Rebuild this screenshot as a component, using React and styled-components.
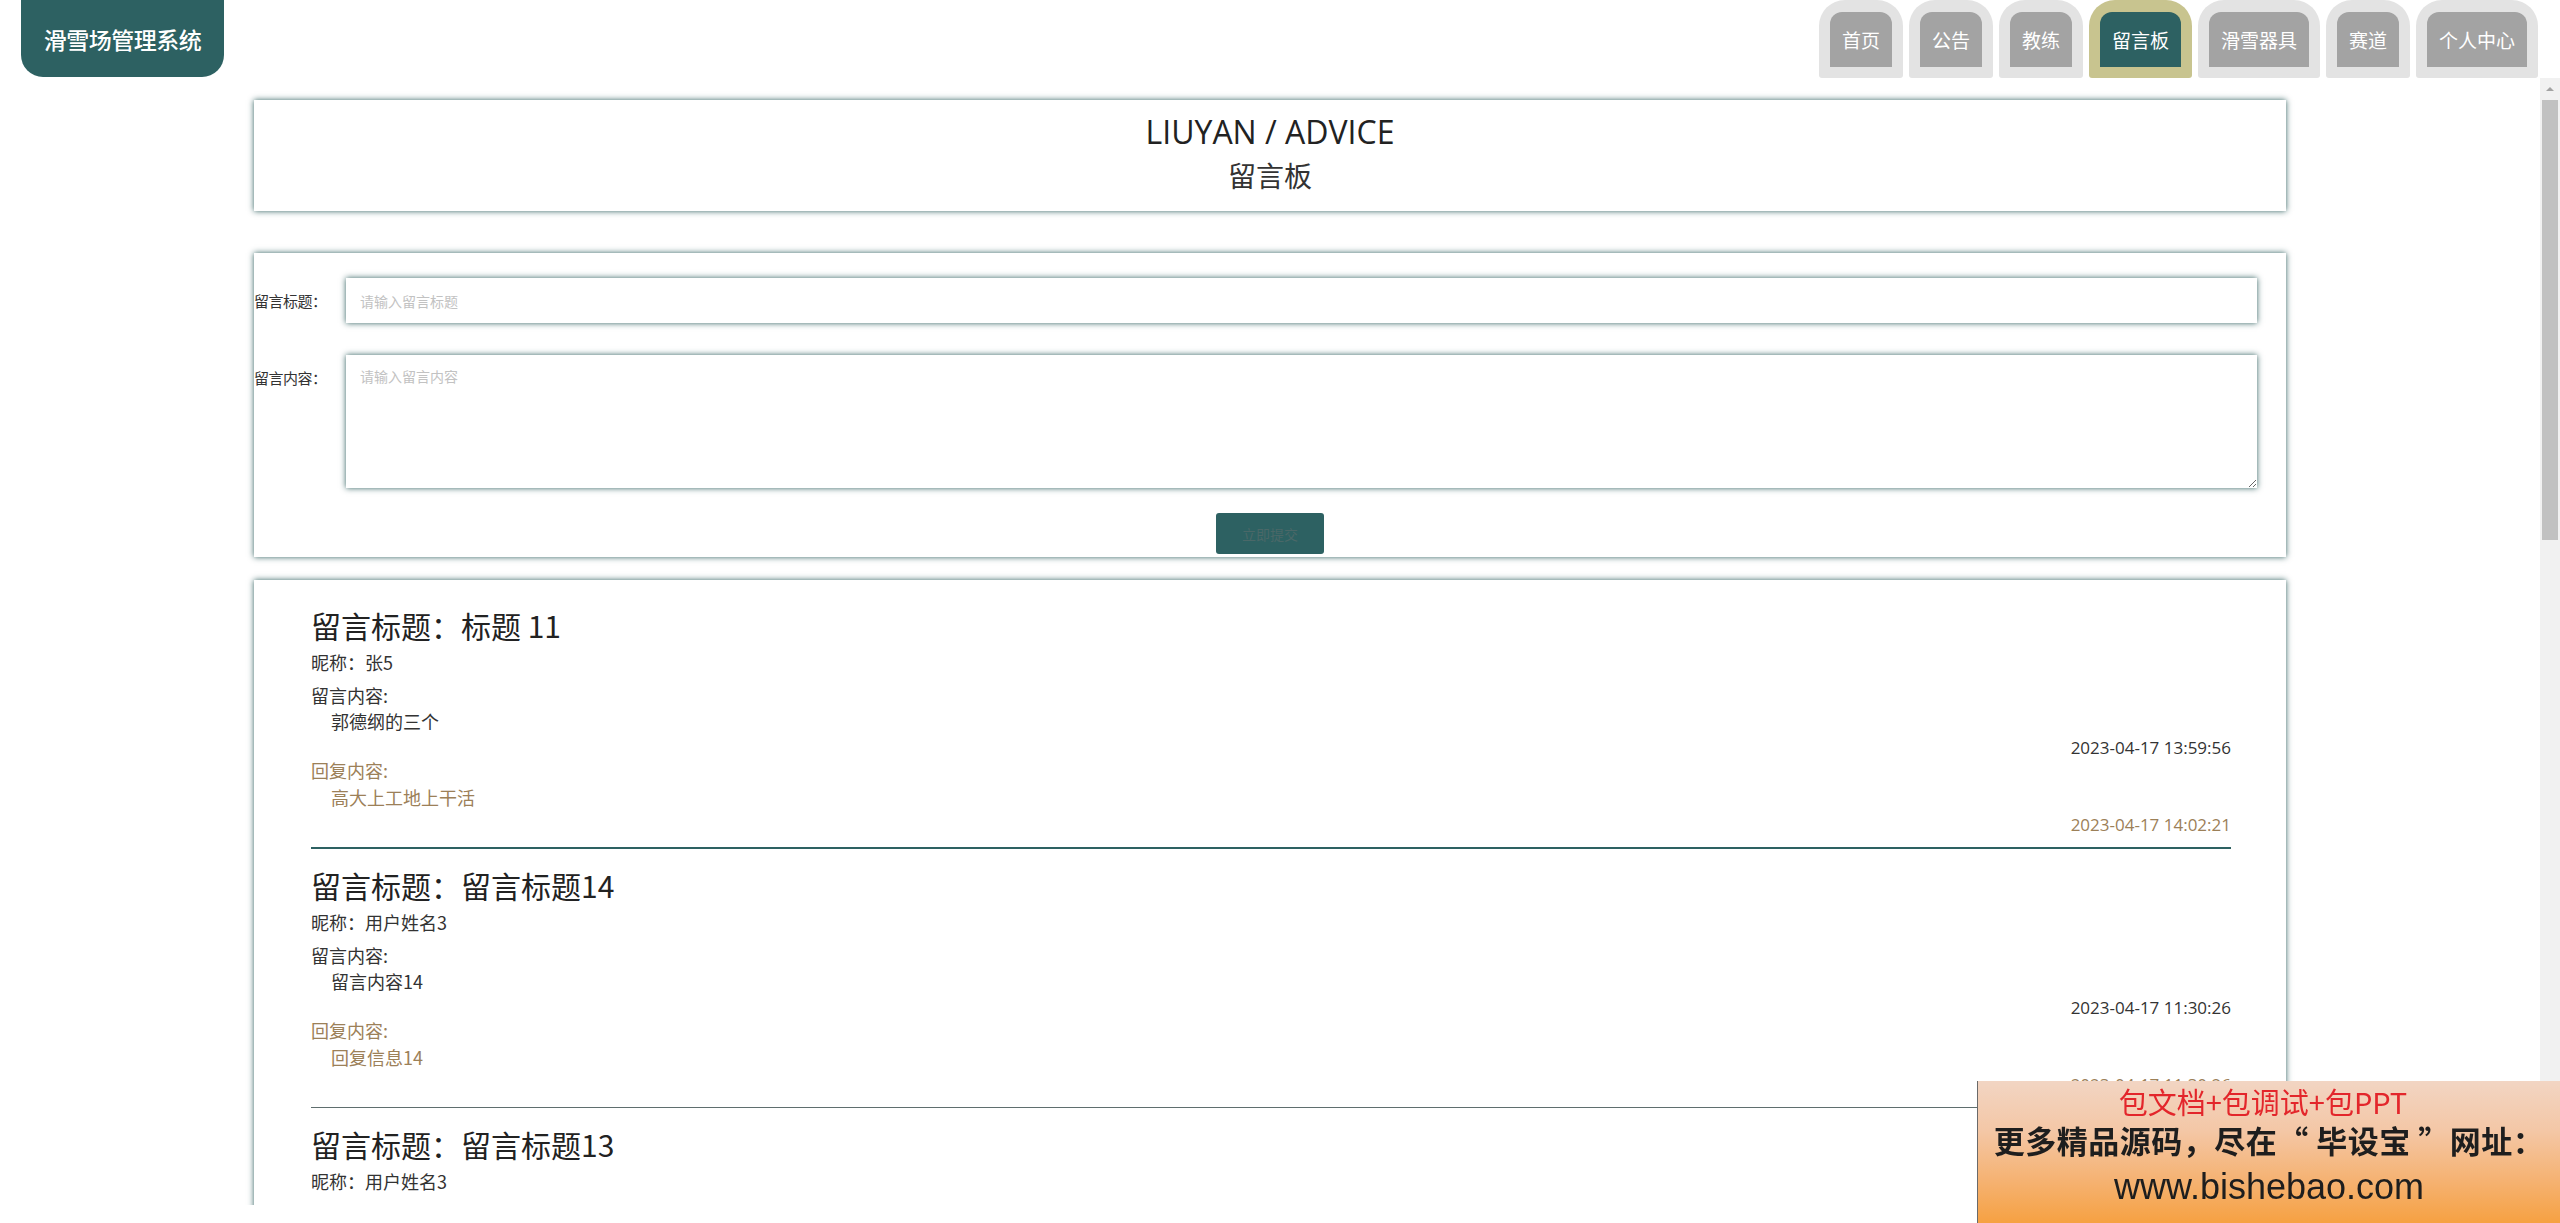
import React from "react";
import styled, { createGlobalStyle, css } from "styled-components";

const GlobalStyle = createGlobalStyle`
  html, body {
    margin: 0;
    padding: 0;
    background: #ffffff;
    overflow: hidden;
  }
  body {
    font-family: "Open Sans", "Noto Sans CJK SC", sans-serif;
    color: #333;
  }
  * { box-sizing: border-box; }
`;

const TEAL = "#2d6162";
const REPLY = "#9c8058";
const SHADOW = "0 0 6px 0 rgba(40, 90, 88, 0.95)";

const Page = styled.div`
  height: 100vh;
  display: flex;
  flex-direction: column;
`;

const Header = styled.header`
  height: 78px;
  flex: none;
  display: flex;
  justify-content: space-between;
  align-items: flex-start;
  padding: 0 22px 0 21px;
`;

const Logo = styled.div`
  width: 203px;
  height: 77px;
  background: ${TEAL};
  border-radius: 0 0 22px 22px;
  color: #fff;
  font-family: "Noto Sans CJK SC", sans-serif;
  font-size: 23px;
  font-weight: 500;
  display: flex;
  align-items: center;
  justify-content: center;
  letter-spacing: -0.5px;
`;

const Nav = styled.nav`
  display: flex;
  gap: 6px;
`;

const TabOuter = styled.div`
  padding: 12px 11px 11px;
  background: ${(p) => (p.$active ? "#c8c48f" : "#e3e3e3")};
  border-radius: 26px 26px 3px 3px;
`;

const TabInner = styled.div`
  height: 55px;
  padding: 0 12px;
  line-height: 55px;
  font-family: "Noto Sans CJK SC", sans-serif;
  font-size: 19px;
  color: #fff;
  background: ${(p) => (p.$active ? TEAL : "#a3a3a3")};
  border-radius: 12px 12px 0 0;
  white-space: nowrap;
`;

const Body = styled.div`
  height: calc(100vh - 96px);
  display: flex;
`;

const Main = styled.main`
  flex: 1;
  min-width: 0;
  overflow-y: auto;
  scrollbar-width: none;
  &::-webkit-scrollbar {
    display: none;
  }
`;

const ScrollRail = styled.div`
  width: 20px;
  flex: none;
  background: #f1f1f1;
  display: flex;
  flex-direction: column;
`;

const ScrollArrow = styled.div`
  height: 22px;
  flex: none;
  display: flex;
  align-items: center;
  justify-content: center;
  &::before {
    content: "";
    border-left: 4px solid transparent;
    border-right: 4px solid transparent;
    border-bottom: ${(p) => (p.$down ? "0" : "4px solid #a3a3a3")};
    border-top: ${(p) => (p.$down ? "4px solid #a3a3a3" : "0")};
  }
`;

const ScrollThumb = styled.div`
  height: 440px;
  flex: none;
  margin: 0 2px;
  background: #c1c1c1;
`;

const ScrollSpace = styled.div`
  flex: 1;
`;

const Container = styled.div`
  width: 80%;
  margin: 0 auto;
  padding-bottom: 40px;
`;

const Card = styled.section`
  background: #fff;
  box-shadow: ${SHADOW};
`;

const TitleCard = styled(Card)`
  margin-top: 22px;
  height: 111px;
  padding-top: 11px;
  text-align: center;
`;

const TitleEn = styled.div`
  font-size: 32px;
  line-height: 42px;
  color: #222;
`;

const TitleCn = styled.div`
  margin-top: 4px;
  font-family: "Noto Sans CJK SC", sans-serif;
  font-size: 28px;
  line-height: 36px;
  color: #333;
`;

const FormCard = styled(Card)`
  margin-top: 42px;
  padding: 25px 0 3px;
`;

const FormRow = styled.div`
  display: grid;
  grid-template-columns: 92px 1fr;
  padding-right: 29px;
  margin-bottom: ${(p) => p.$gap || 0}px;
`;

const Label = styled.label`
  font-family: "Noto Sans CJK SC", sans-serif;
  font-size: 15px;
  line-height: 45px;
  color: #333;
  white-space: nowrap;
  letter-spacing: -0.5px;
`;

const fieldStyle = css`
  width: 100%;
  border: 0;
  outline: none;
  background: #fff;
  box-shadow: ${SHADOW};
  font-family: "Noto Sans CJK SC", sans-serif;
  font-size: 14px;
  color: #333;
  &::placeholder {
    color: #c2c2c2;
  }
`;

const Input = styled.input`
  ${fieldStyle}
  height: 45px;
  padding: 0 14px;
`;

const TextArea = styled.textarea`
  ${fieldStyle}
  height: 133px;
  padding: 10px 14px;
  line-height: 22px;
  display: block;
`;

const ButtonRow = styled.div`
  display: flex;
  justify-content: center;
  margin-top: 25px;
`;

const SubmitButton = styled.button`
  width: 108px;
  height: 41px;
  border: 0;
  border-radius: 3px;
  background: ${TEAL};
  color: #4a6868;
  font-family: "Noto Sans CJK SC", sans-serif;
  font-size: 14px;
  cursor: pointer;
`;

const ListCard = styled(Card)`
  margin-top: 23px;
  padding: 9px 55px 30px 57px;
`;

const Item = styled.article`
  padding: 15px 0 12px;
  border-bottom: ${(p) => (p.$active ? `2px solid ${TEAL}` : "1px solid #5f6e6e")};
`;

const ItemTitle = styled.h3`
  margin: 0;
  font-family: "Noto Sans CJK SC", sans-serif;
  font-weight: 400;
  font-size: 30px;
  line-height: 42px;
  color: #222;
`;

const Line = styled.div`
  font-family: "Noto Sans CJK SC", sans-serif;
  font-size: 18px;
  line-height: 24px;
  color: ${(p) => (p.$reply ? REPLY : "#333")};
  margin-top: ${(p) => p.$mt || 0}px;
  padding-left: ${(p) => (p.$indent ? 20 : 0)}px;
`;

const Time = styled.div`
  font-family: "Open Sans", sans-serif;
  font-size: 17px;
  line-height: 20px;
  text-align: right;
  color: ${(p) => (p.$reply ? REPLY : "#333")};
  margin-top: ${(p) => p.$mt || 0}px;
`;

const Ad = styled.aside`
  position: fixed;
  right: 0;
  bottom: 0;
  width: 583px;
  height: 142px;
  border-left: 1px solid #6a6a6a;
  background: linear-gradient(180deg, #f2d5c3 0%, #f4c7a6 35%, #f5b272 70%, #f6a142 100%);
  text-align: center;
  padding-top: 3px;
  z-index: 10;
`;

const AdRed = styled.div`
  font-family: "Noto Sans CJK SC", sans-serif;
  font-size: 29px;
  line-height: 34px;
  color: #e3262b;
  padding-right: 12px;
`;

const AdBold = styled.div`
  margin-top: 2px;
  font-family: "Noto Sans CJK SC", sans-serif;
  font-size: 31px;
  font-weight: 700;
  line-height: 40px;
  color: #1e1e1e;
  white-space: nowrap;
  letter-spacing: 0.5px;
`;

const AdUrl = styled.div`
  margin-top: 5px;
  font-family: "Liberation Sans", Arial, sans-serif;
  font-size: 36px;
  line-height: 44px;
  color: #1e1e1e;
`;

const tabs = ["首页", "公告", "教练", "留言板", "滑雪器具", "赛道", "个人中心"];

const messages = [
  { title: "标题 11", nick: "张5", content: "郭德纲的三个", time: "2023-04-17 13:59:56", reply: "高大上工地上干活", replyTime: "2023-04-17 14:02:21" },
  { title: "留言标题14", nick: "用户姓名3", content: "留言内容14", time: "2023-04-17 11:30:26", reply: "回复信息14", replyTime: "2023-04-17 11:30:26" },
  { title: "留言标题13", nick: "用户姓名3", content: "留言内容13", time: "2023-04-17 11:30:26", reply: "回复信息13", replyTime: "2023-04-17 11:30:26" },
  { title: "留言标题12", nick: "用户姓名2", content: "留言内容12", time: "2023-04-17 11:30:26", reply: "回复信息12", replyTime: "2023-04-17 11:30:26" },
  { title: "留言标题11", nick: "用户姓名1", content: "留言内容11", time: "2023-04-17 11:30:26", reply: "回复信息11", replyTime: "2023-04-17 11:30:26" },
  { title: "留言标题10", nick: "用户姓名10", content: "留言内容10", time: "2023-04-17 11:30:26", reply: "回复信息10", replyTime: "2023-04-17 11:30:26" },
  { title: "留言标题9", nick: "用户姓名9", content: "留言内容9", time: "2023-04-17 11:30:26", reply: "回复信息9", replyTime: "2023-04-17 11:30:26" },
  { title: "留言标题8", nick: "用户姓名8", content: "留言内容8", time: "2023-04-17 11:30:26", reply: "回复信息8", replyTime: "2023-04-17 11:30:26" },
];

export default function App() {
  return (
    <>
      <GlobalStyle />
      <Page>
        <Header>
          <Logo>滑雪场管理系统</Logo>
          <Nav>
            {tabs.map((t) => (
              <TabOuter key={t} $active={t === "留言板"}>
                <TabInner $active={t === "留言板"}>{t}</TabInner>
              </TabOuter>
            ))}
          </Nav>
        </Header>
        <Body>
          <Main>
            <Container>
              <TitleCard>
                <TitleEn>LIUYAN / ADVICE</TitleEn>
                <TitleCn>留言板</TitleCn>
              </TitleCard>

              <FormCard>
                <FormRow $gap={32}>
                  <Label>留言标题：</Label>
                  <Input placeholder="请输入留言标题" />
                </FormRow>
                <FormRow>
                  <Label>留言内容：</Label>
                  <TextArea placeholder="请输入留言内容" />
                </FormRow>
                <ButtonRow>
                  <SubmitButton>立即提交</SubmitButton>
                </ButtonRow>
              </FormCard>

              <ListCard>
                {messages.map((m, i) => (
                  <Item key={i} $active={i === 0}>
                    <ItemTitle>留言标题：{m.title}</ItemTitle>
                    <Line $mt={4}>昵称：{m.nick}</Line>
                    <Line $mt={9}>留言内容:</Line>
                    <Line $mt={2} $indent>{m.content}</Line>
                    <Time $mt={5}>{m.time}</Time>
                    <Line $reply>回复内容:</Line>
                    <Line $reply $mt={3} $indent>{m.reply}</Line>
                    <Time $reply $mt={6}>{m.replyTime}</Time>
                  </Item>
                ))}
              </ListCard>
            </Container>
          </Main>
          <ScrollRail aria-hidden="true">
            <ScrollArrow />
            <ScrollThumb />
            <ScrollSpace />
            <ScrollArrow $down />
          </ScrollRail>
        </Body>
      </Page>
      <Ad>
        <AdRed>包文档+包调试+包PPT</AdRed>
        <AdBold>更多精品源码，尽在“ 毕设宝 ”网址：</AdBold>
        <AdUrl>www.bishebao.com</AdUrl>
      </Ad>
    </>
  );
}
